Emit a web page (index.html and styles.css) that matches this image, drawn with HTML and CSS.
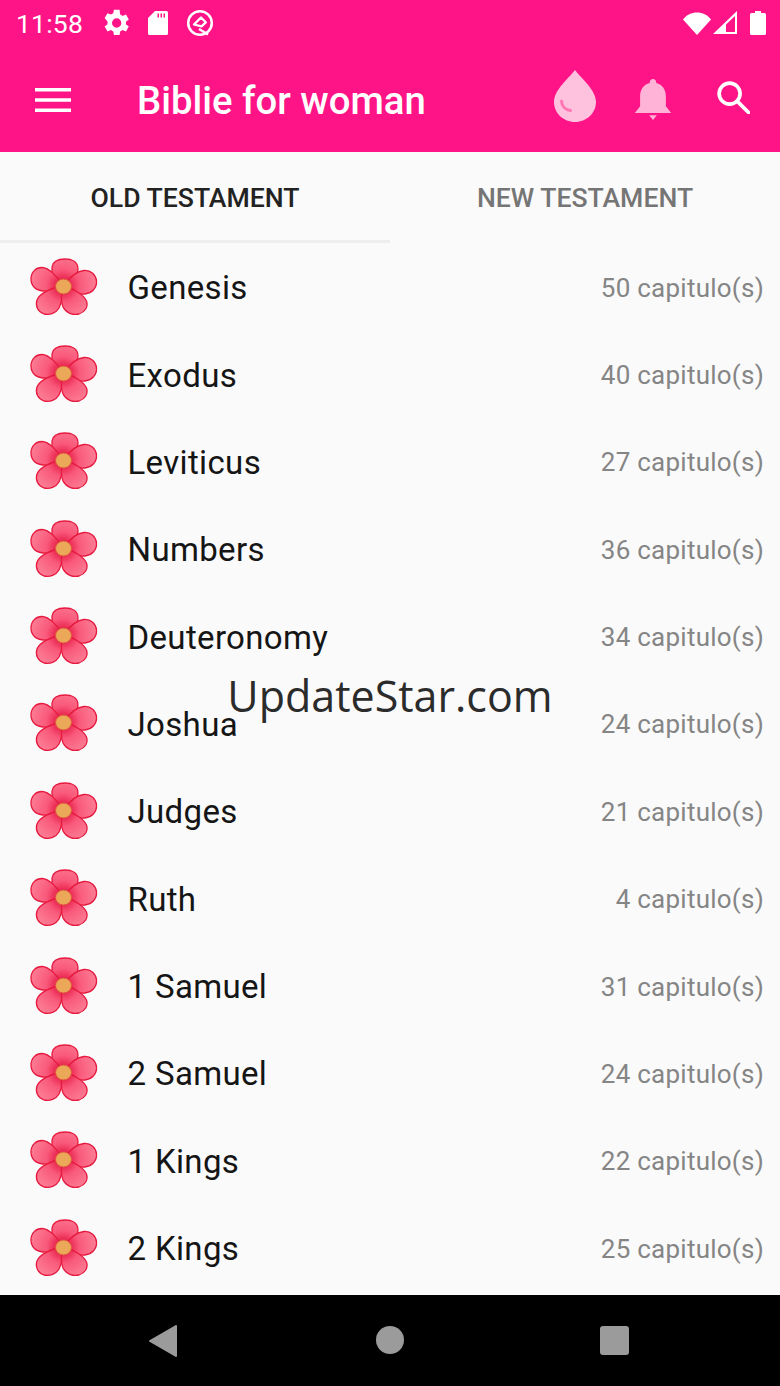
FILE: index.html
```html
<!DOCTYPE html>
<html lang="en">
<head>
    <meta charset="UTF-8">
    <meta name="viewport" content="width=device-width, initial-scale=1.0">
    <title>Biblie for woman</title>
    <link rel="stylesheet" href="styles.css">
</head>
<body>
    <svg class="defs" width="0" height="0">
        <defs>
            <radialGradient id="petal" gradientUnits="userSpaceOnUse" cx="33" cy="28" r="33">
                <stop offset="0.2" stop-color="#e8244e"/>
                <stop offset="0.5" stop-color="#f9597a"/>
                <stop offset="1" stop-color="#fc7c94"/>
            </radialGradient>
            <symbol id="flower" viewBox="0 0 68 58">
                <g fill="url(#petal)" stroke="#e6193f" stroke-width="1.300" stroke-linejoin="round">
                    <path d="M33 28C25 22 21 15 22 9 23 3 29 1 35 1c7 0 13 3 13 10 0 6-7 13-15 17z"/>
                    <path d="M33 28c6-8 14-15 21-15.500C61 12 66 17 66.500 23c.5 7-4.500 12-11.500 13-7 1-15-3-22-8z"/>
                    <path d="M33 28c-6 5-13 5.500-20 5C6 32.500 1 28 1 21S6 9.500 12 9.500C19 9.500 28 19 33 28z"/>
                    <path d="M33 28c0 8-1 16-4 22-3 5-9 7.500-15 6-6-2-9-8-7-14 2-6 15-13 26-14z"/>
                    <path d="M33 28c10 2 21 9 23.500 15 2 6-1.500 11-7.500 13-6 1.500-13-1-16-7-2-5-2-13 0-21z"/>
                </g>
                <ellipse cx="33.500" cy="28.500" rx="8" ry="7.500" fill="#eaa858" stroke="#e0553f" stroke-width="1"/>
            </symbol>
        </defs>
    </svg>

    <div class="screen">
        <header class="app-top">
            <div class="status-bar">
                <span class="clock">11:58</span>
                <!-- gear -->
                <svg class="st-icon gear" viewBox="0 0 24 24"><path d="M19.400 13c.1-.3.1-.7.1-1s0-.7-.1-1l2.200-1.700-2.100-3.600-2.600 1c-.5-.4-1.100-.8-1.800-1L14.700 2h-4.300l-.4 2.700c-.6.2-1.200.6-1.800 1l-2.600-1-2.100 3.600L5.700 11c0 .3-.1.700-.1 1s0 .7.1 1l-2.200 1.700 2.100 3.600 2.600-1c.5.400 1.100.8 1.800 1l.4 2.700h4.300l.4-2.700c.6-.2 1.200-.6 1.800-1l2.600 1 2.100-3.600zM12.500 15.500a3.500 3.500 0 1 1 0-7 3.500 3.500 0 0 1 0 7z"/></svg>
                <!-- sd card -->
                <svg class="st-icon sd" viewBox="0 0 20 24"><path fill-rule="evenodd" d="M7 0h11.500A1.500 1.500 0 0 1 20 1.500v21a1.500 1.500 0 0 1-1.500 1.500h-17A1.500 1.500 0 0 1 0 22.500V7zM9.500 2.500v4H11v-4zm3 0v4H14v-4zm3 0v4H17v-4z"/></svg>
                <!-- no-disturb ring -->
                <svg class="st-icon ring" viewBox="0 0 28 28"><circle cx="14" cy="14" r="11.800" stroke-width="2.500"/><path d="M8 15.500 15 8.500l4.800 4.800-4.300 4z" stroke-width="2.300" stroke-linejoin="round"/><path d="M13 20l9 5.500" stroke-width="2.300"/></svg>
                <span class="spacer"></span>
                <svg class="st-icon wifi" viewBox="0 0 28 23"><path d="M14 23 0 7.500C3.500 3 8.500.5 14 .5S24.500 3 28 7.500z"/></svg>
                <svg class="st-icon signal" viewBox="0 0 24 24"><path fill-rule="evenodd" d="M24 0v23H0zM22 5 13 13.500V21h9z"/></svg>
                <svg class="st-icon battery" viewBox="0 0 16 24"><path d="M5 0h6v2h3.500A1.500 1.500 0 0 1 16 3.500v19a1.500 1.500 0 0 1-1.500 1.500h-13A1.500 1.500 0 0 1 0 22.500v-19A1.500 1.500 0 0 1 1.500 2H5z"/></svg>
            </div>
            <div class="toolbar">
                <svg class="menu-icon" viewBox="0 0 36 24"><path d="M0 0h36v3.600H0zM0 10.200h36v3.600H0zM0 20.400h36V24H0z"/></svg>
                <h1 class="app-title">Biblie for woman</h1>
                <!-- drop -->
                <svg class="drop-icon" viewBox="0 0 42 52">
                    <path fill="#ffc2de" d="M21 0C15 8 0 20 0 32c0 11 9.500 20 21 20s21-9 21-20C42 20 27 8 21 0z"/>
                    <path fill="none" stroke="#ff78b4" stroke-width="3" stroke-linecap="round" d="M7.500 31c0 5 4 9 9 9.500"/>
                </svg>
                <!-- bell -->
                <svg class="bell-icon" viewBox="0 0 38 44">
                    <path fill="#ffb3d6" d="M19 0c2 0 3.400 1.500 3.400 3.400v.9C29 6 32.500 11.500 32.500 18v10.500L38 35.500H0l5.500-7V18C5.500 11.500 9 6 15.600 4.300v-.9C15.600 1.500 17 0 19 0zM15 38h8l-4 5z"/>
                </svg>
                <!-- search -->
                <svg class="search-icon" viewBox="0 0 34 34" fill="none" stroke="#fff" stroke-width="3.800">
                    <circle cx="13" cy="13" r="10.800"/>
                    <path d="M21 21l11.500 11.500" stroke-linecap="round"/>
                </svg>
            </div>
        </header>

        <nav class="tabs">
            <div class="tab active">OLD TESTAMENT</div>
            <div class="tab">NEW TESTAMENT</div>
        </nav>

        <main class="book-list">
            <div class="book-row"><svg class="flower"><use href="#flower"/></svg><span class="book-name">Genesis</span><span class="book-count">50 capitulo(s)</span></div>
            <div class="book-row"><svg class="flower"><use href="#flower"/></svg><span class="book-name">Exodus</span><span class="book-count">40 capitulo(s)</span></div>
            <div class="book-row"><svg class="flower"><use href="#flower"/></svg><span class="book-name">Leviticus</span><span class="book-count">27 capitulo(s)</span></div>
            <div class="book-row"><svg class="flower"><use href="#flower"/></svg><span class="book-name">Numbers</span><span class="book-count">36 capitulo(s)</span></div>
            <div class="book-row"><svg class="flower"><use href="#flower"/></svg><span class="book-name">Deuteronomy</span><span class="book-count">34 capitulo(s)</span></div>
            <div class="book-row"><svg class="flower"><use href="#flower"/></svg><span class="book-name">Joshua</span><span class="book-count">24 capitulo(s)</span></div>
            <div class="book-row"><svg class="flower"><use href="#flower"/></svg><span class="book-name">Judges</span><span class="book-count">21 capitulo(s)</span></div>
            <div class="book-row"><svg class="flower"><use href="#flower"/></svg><span class="book-name">Ruth</span><span class="book-count">4 capitulo(s)</span></div>
            <div class="book-row"><svg class="flower"><use href="#flower"/></svg><span class="book-name">1 Samuel</span><span class="book-count">31 capitulo(s)</span></div>
            <div class="book-row"><svg class="flower"><use href="#flower"/></svg><span class="book-name">2 Samuel</span><span class="book-count">24 capitulo(s)</span></div>
            <div class="book-row"><svg class="flower"><use href="#flower"/></svg><span class="book-name">1 Kings</span><span class="book-count">22 capitulo(s)</span></div>
            <div class="book-row"><svg class="flower"><use href="#flower"/></svg><span class="book-name">2 Kings</span><span class="book-count">25 capitulo(s)</span></div>
        </main>

        <div class="watermark">UpdateStar.com</div>

        <footer class="nav-bar">
            <svg class="nav-back" viewBox="0 0 28 32"><path stroke-width="2" stroke-linejoin="round" d="M27 1v30L1 16z"/></svg>
            <span class="nav-home"></span>
            <span class="nav-recent"></span>
        </footer>
    </div>
</body>
</html>
```

FILE: styles.css
```css
html, body {
    margin: 0;
    padding: 0;
}
body {
    font-family: Roboto, "Liberation Sans", sans-serif;
    background-color: #fafafa;
}
.defs {
    display: block;
    height: 0;
}
.screen {
    position: relative;
    display: flex;
    flex-direction: column;
    width: 780px;
    height: 1386px;
    overflow: hidden;
}
.app-top {
    flex: none;
    background-color: #ff1487;
    color: white;
}
.status-bar {
    display: flex;
    align-items: center;
    height: 46px;
    margin-bottom: 2px;
    padding: 0 14px 0 16px;
    box-sizing: border-box;
}
.clock {
    font-size: 26.5px;
    width: 84px;
    letter-spacing: 0.2px;
}
.st-icon {
    fill: white;
    display: block;
    flex: none;
}
.gear { width: 32px; height: 32px; }
.sd { width: 20px; height: 24px; margin-left: 16px; }
.ring { width: 28px; height: 28px; margin-left: 18px; fill: none; stroke: white; }
.spacer { flex: 1; }
.wifi { width: 28px; height: 23px; }
.signal { width: 24px; height: 24px; margin-left: 2px; }
.battery { width: 16px; height: 24px; margin-left: 13px; }

.toolbar {
    display: flex;
    align-items: center;
    height: 104px;
    padding-left: 35px;
    box-sizing: border-box;
}
.menu-icon {
    width: 36px;
    height: 24px;
    fill: white;
    flex: none;
}
.app-title {
    flex: 1;
    margin: 0 0 0 66px;
    font-size: 38.3px;
    font-weight: 500;
}
.drop-icon {
    width: 42px;
    height: 52px;
    flex: none;
    margin-top: -8px;
}
.bell-icon {
    width: 38px;
    height: 42px;
    flex: none;
    margin-left: 38px;
}
.search-icon {
    width: 33px;
    height: 33px;
    flex: none;
    margin-left: 45px;
    margin-right: 30px;
    margin-top: -6px;
}

.tabs {
    flex: none;
    display: flex;
    height: 91px;
}
.tab {
    flex: 1;
    display: flex;
    align-items: center;
    justify-content: center;
    font-size: 26.6px;
    font-weight: 500;
    color: #757575;
}
.tab.active {
    color: #222;
    padding-top: 3px;
    border-bottom: 3px solid #eeeeee;
}

.book-list {
    flex: 1;
    min-height: 0;
}
.book-row {
    display: flex;
    align-items: center;
    height: 87.36px;
    padding: 0 16px 0 30px;
    box-sizing: border-box;
}
.flower {
    width: 68px;
    height: 58px;
    flex: none;
}
.book-name {
    flex: 1;
    margin: 2px 0 0 29.5px;
    font-size: 33px;
    color: #151515;
    letter-spacing: 0.35px;
}
.book-count {
    margin-top: 2px;
    font-size: 26px;
    color: #858585;
    letter-spacing: 0.25px;
}

.watermark {
    position: absolute;
    left: 0;
    right: 0;
    top: 667px;
    text-align: center;
    font-family: "Open Sans", sans-serif;
    font-size: 43px;
    line-height: 58px;
    color: #2b2b2b;
}

.nav-bar {
    flex: none;
    position: relative;
    height: 91px;
    background-color: #000;
}
.nav-back {
    position: absolute;
    left: 149px;
    top: 30px;
    width: 28px;
    height: 32px;
    fill: #9b9b9b;
    stroke: #9b9b9b;
}
.nav-home {
    position: absolute;
    left: 376px;
    top: 31px;
    width: 28px;
    height: 28px;
    border-radius: 50%;
    background-color: #9b9b9b;
}
.nav-recent {
    position: absolute;
    left: 600px;
    top: 31px;
    width: 29px;
    height: 29px;
    border-radius: 3px;
    background-color: #9b9b9b;
}
```
